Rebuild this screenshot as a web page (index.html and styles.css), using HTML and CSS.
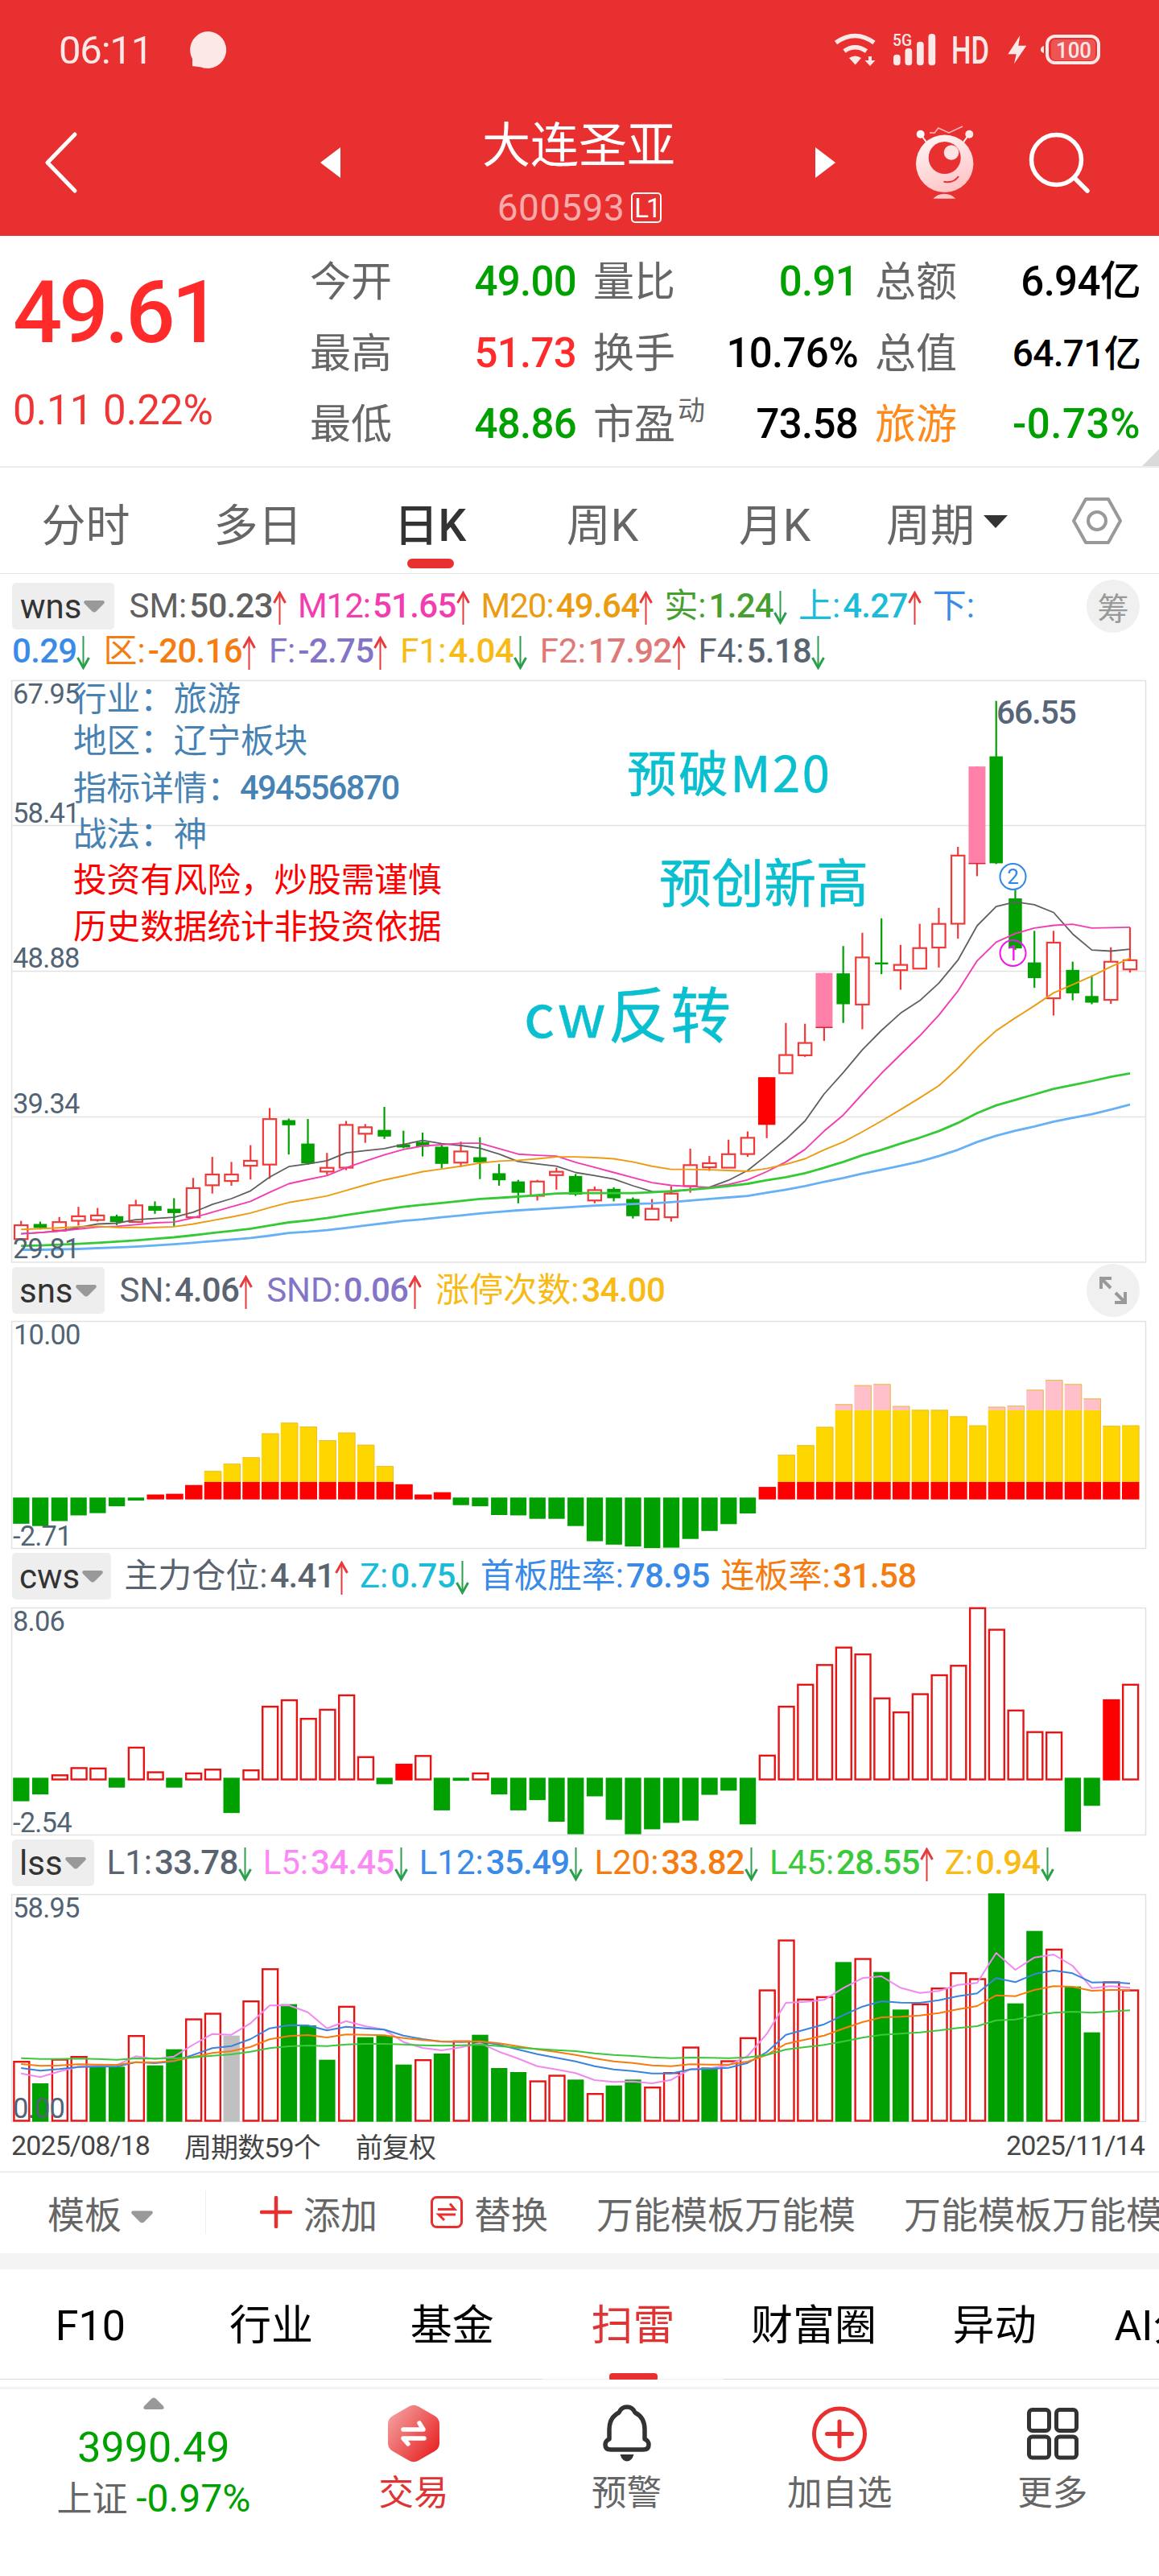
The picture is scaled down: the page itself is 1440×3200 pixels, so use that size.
FILE: index.html
```html
<!DOCTYPE html>
<html lang="zh-CN">
<head>
  <meta charset="UTF-8" />
  <title>大连圣亚 600593</title>
  <meta name="viewport" content="width=device-width, initial-scale=1.0" />
  <link rel="stylesheet" href="styles.css">
</head>
<body>
  <svg class="defs">
    <symbol id="up" viewBox="0 0 17 42"><path d="M8.5 3V42" stroke="#e83a3a" stroke-width="2"/><path d="M1.5 15L8.5 2.5L15.5 15" fill="none" stroke="#e83a3a" stroke-width="3"/></symbol>
    <symbol id="down" viewBox="0 0 17 42"><path d="M8.5 0V39" stroke="#2a9f4c" stroke-width="2"/><path d="M1.5 27L8.5 39.5L15.5 27" fill="none" stroke="#2a9f4c" stroke-width="3"/></symbol>
    <symbol id="caret" viewBox="0 0 26 15"><path d="M2 0H24Q27 1 25 4L16 13Q13 16 10 13L1 4Q-1 1 2 0Z" fill="#999"/></symbol>
  </svg>

  <header class="header">
    <div class="status">
      <span class="time">06:11</span>
      <svg class="bubble" width="46" height="47" viewBox="0 0 46 47"><path d="M23 0A23 23 0 1 1 14 44.500L3 43V34A23 23 0 0 1 23 0Z" fill="#fde8e8"/></svg>
      <svg class="signals" width="340" height="50" viewBox="0 0 340 50" fill="#fde8e8">
        <path d="M8.500 18Q32.300 1 56 18M19 28.500Q32.300 19 46.500 28.500" fill="none" stroke="#fde8e8" stroke-width="5.500"/>
        <path d="M25 37Q32.500 32 40 37L32.700 45.500Z"/>
        <path d="M49 35H53V40H57.500L51 47L44.500 40H49Z"/>
        <text class="sig" x="79" y="21.500" font-size="20" textLength="24" lengthAdjust="spacingAndGlyphs">5G</text>
        <rect x="80" y="32.700" width="8.700" height="13.500" rx="4"/>
        <rect x="94.500" y="25" width="8.700" height="21.200" rx="4"/>
        <rect x="109" y="16.700" width="8.700" height="29.500" rx="4"/>
        <rect x="123.500" y="7" width="8.700" height="39.200" rx="4"/>
        <text class="sig" x="152" y="44" font-size="48" textLength="47" lengthAdjust="spacingAndGlyphs">HD</text>
        <path d="M237.300 9L222.300 32.300H232.700L230 44.300L245.300 21.700H235.300Z"/>
        <rect x="271" y="10" width="64" height="33" rx="10" fill="none" stroke="#fde8e8" stroke-width="4"/>
        <rect x="276" y="14" width="55" height="26" rx="5" fill-opacity=".2"/>
        <path d="M267 22V31Q263 30 263 26.500Q263 23 267 22Z"/>
        <text class="sig" x="282" y="37.300" font-size="27" textLength="44" lengthAdjust="spacingAndGlyphs">100</text>
      </svg>
    </div>
    <div class="titlebar">
      <svg class="back" width="44" height="78" viewBox="0 0 44 78"><path d="M39 4L5 39L39 74" fill="none" stroke="#fff" stroke-width="5" stroke-linecap="round" stroke-linejoin="round"/></svg>
      <svg class="prev" width="25" height="38" viewBox="0 0 25 38"><path d="M25 0V38L0 19Z" fill="#fff"/></svg>
      <div class="stock">
        <div class="stock-name">大连圣亚</div>
        <div class="stock-code">600593<span class="level">L1</span></div>
      </div>
      <svg class="next" width="25" height="38" viewBox="0 0 25 38"><path d="M0 0V38L25 19Z" fill="#fff"/></svg>
      <svg class="robot" width="88" height="100" viewBox="0 0 88 100">
        <defs><linearGradient id="rg" x1="0.3" y1="0" x2="0.7" y2="1"><stop offset="0" stop-color="#fff4f4"/><stop offset="1" stop-color="#ffc2c4"/></linearGradient></defs>
        <path d="M14 17L22 28M74 17L66 28" stroke="#fff" stroke-width="2"/>
        <circle cx="13.700" cy="16.700" r="5" fill="#fff"/><circle cx="74.300" cy="16.700" r="5" fill="#ffe9e9"/>
        <path d="M25 15H31.300L35.700 9L49 15L66 7" fill="none" stroke="#ffb9b9" stroke-width="1.500"/>
        <circle cx="43.700" cy="53.300" r="35.700" fill="url(#rg)"/>
        <circle cx="43.700" cy="46" r="20" fill="#e83030"/>
        <circle cx="52" cy="39.500" r="9.300" fill="#ffe3e3"/>
        <path d="M42.500 75.800Q55 78 61 69" fill="none" stroke="#e83030" stroke-width="2"/>
        <path d="M29.300 96.700Q35 90.700 43.300 90.700T57.300 96.700Z" fill="#ffc9c9"/>
      </svg>
      <svg class="search" width="78" height="78" viewBox="0 0 78 78"><g fill="none" stroke="#fff" stroke-width="5.500" stroke-linecap="round"><circle cx="34.500" cy="34.500" r="31"/><path d="M57 57L73 73"/></g></svg>
    </div>
  </header>

  <section class="quote">
    <div class="price-box">
      <div class="price">49.61</div>
      <div class="change">0.11 0.22%</div>
    </div>
    <div class="quote-grid">
      <div class="cell"><span>今开</span><b class="down">49.00</b></div>
      <div class="cell"><span>量比</span><b class="down">0.91</b></div>
      <div class="cell"><span>总额</span><b class="yi">6.94亿</b></div>
      <div class="cell"><span>最高</span><b class="up">51.73</b></div>
      <div class="cell"><span>换手</span><b>10.76%</b></div>
      <div class="cell"><span>总值</span><b class="yi small">64.71亿</b></div>
      <div class="cell"><span>最低</span><b class="down">48.86</b></div>
      <div class="cell"><span>市盈<sup>动</sup></span><b>73.58</b></div>
      <div class="cell"><span class="trade">旅游</span><b class="down wide">-0.73%</b></div>
    </div>
    <svg class="corner" width="21" height="21" viewBox="0 0 21 21"><path d="M21 0V21H0Z" fill="#dadada"/></svg>
  </section>

  <nav class="periods">
    <span>分时</span>
    <span>多日</span>
    <span class="active">日K</span>
    <span>周K</span>
    <span>月K</span>
    <span>周期<svg width="30" height="16" viewBox="0 0 30 16"><path d="M0 0H30L15 16Z" fill="#333"/></svg></span>
    <svg class="hexagon" width="64" height="60" viewBox="0 0 64 60"><g fill="none" stroke="#999" stroke-width="4" stroke-linejoin="round"><path d="M18 3H46L61 30L46 57H18L3 30Z"/><circle cx="32" cy="30" r="11"/></g></svg>
  </nav>

  <div class="legend main-legend">
    <div class="legend-row">
      <span class="tag">wns<svg width="26" height="15"><use href="#caret"/></svg></span>
      <span class="ind gray">SM:<b>50.23</b><svg><use href="#up"/></svg></span>
      <span class="ind pink">M12:<b>51.65</b><svg><use href="#up"/></svg></span>
      <span class="ind amber">M20:<b>49.64</b><svg><use href="#up"/></svg></span>
      <span class="ind green">实:<b>1.24</b><svg><use href="#down"/></svg></span>
      <span class="ind cyan">上:<b>4.27</b><svg><use href="#up"/></svg></span>
      <span class="ind blue">下:</span>
      <span class="round">筹</span>
    </div>
    <div class="legend-row second">
      <span class="ind blue lead"><b>0.29</b><svg><use href="#down"/></svg></span>
      <span class="ind orange">区:<b>-20.16</b><svg><use href="#up"/></svg></span>
      <span class="ind purple">F:<b>-2.75</b><svg><use href="#up"/></svg></span>
      <span class="ind yellow">F1:<b>4.04</b><svg><use href="#down"/></svg></span>
      <span class="ind rose">F2:<b>17.92</b><svg><use href="#up"/></svg></span>
      <span class="ind slate">F4:<b>5.18</b><svg><use href="#down"/></svg></span>
    </div>
  </div>

  <svg class="chart main" viewBox="0 0 1440 724">
    <path class="frame" d="M14.500 0.500H1423.500V723H14.500ZM14.500 180.500H1423.500M14.500 361.500H1423.500M14.500 542.500H1423.500"/>
    <g id="kline"></g>
    <g class="axis">
      <text x="16" y="29">67.95</text>
      <text x="16" y="177">58.41</text>
      <text x="16" y="357">48.88</text>
      <text x="16" y="538">39.34</text>
      <text x="16" y="718">29.81</text>
    </g>
    <text class="peak" x="1238" y="54">66.55</text>
    <g class="note">
      <text x="91" y="38">行业：旅游</text>
      <text x="91" y="90">地区：辽宁板块</text>
      <text x="91" y="149">指标详情：</text>
      <text class="id" x="298" y="148">494556870</text>
      <text x="91" y="206">战法：神</text>
    </g>
    <g class="note warn">
      <text x="91" y="263">投资有风险，炒股需谨慎</text>
      <text x="91" y="321">历史数据统计非投资依据</text>
    </g>
    <g class="signal">
      <text x="779" y="139" font-size="61.500" textLength="252">预破M20</text>
      <text x="819" y="276" font-size="65">预创新高</text>
      <text x="651" y="444" font-size="74.500" textLength="257">cw反转</text>
    </g>
    <g class="mark">
      <circle cx="1258.500" cy="244" r="16" stroke="#2e86e8"/><text x="1258.500" y="253" fill="#2e86e8">2</text>
      <circle cx="1258.500" cy="339" r="16" stroke="#f014f0"/><text x="1258.500" y="348" fill="#f014f0">1</text>
    </g>
  </svg>

  <div class="legend">
    <div class="legend-row loose">
      <span class="tag">sns<svg width="26" height="15"><use href="#caret"/></svg></span>
      <span class="ind slate">SN:<b>4.06</b><svg><use href="#up"/></svg></span>
      <span class="ind purple">SND:<b>0.06</b><svg><use href="#up"/></svg></span>
      <span class="ind yellow">涨停次数:<b>34.00</b></span>
      <span class="round"><svg width="34" height="34" viewBox="0 0 34 34"><g fill="none" stroke="#999" stroke-width="4"><path d="M2 15V2H15M2 2L14 14M32 19V32H19M32 32L20 20"/></g></svg></span>
    </div>
  </div>
  <svg class="chart sub" viewBox="0 0 1440 283">
    <path class="frame" d="M14.500 0.500H1423.500V282.500H14.500Z"/>
    <g id="sns"></g>
    <g class="axis"><text x="17" y="29">10.00</text><text x="16" y="278.500">-2.71</text></g>
  </svg>

  <div class="legend">
    <div class="legend-row">
      <span class="tag">cws<svg width="26" height="15"><use href="#caret"/></svg></span>
      <span class="ind slate">主力仓位:<b>4.41</b><svg><use href="#up"/></svg></span>
      <span class="ind cyan">Z:<b>0.75</b><svg><use href="#down"/></svg></span>
      <span class="ind blue">首板胜率:<b>78.95</b></span>
      <span class="ind orange">连板率:<b>31.58</b></span>
    </div>
  </div>
  <svg class="chart sub" viewBox="0 0 1440 283">
    <path class="frame" d="M14.500 0.500H1423.500V282.500H14.500Z"/>
    <g id="cws"></g>
    <g class="axis"><text x="16" y="29">8.06</text><text x="16" y="278.500">-2.54</text></g>
  </svg>

  <div class="legend">
    <div class="legend-row">
      <span class="tag">lss<svg width="26" height="15"><use href="#caret"/></svg></span>
      <span class="ind slate">L1:<b>33.78</b><svg><use href="#down"/></svg></span>
      <span class="ind violet">L5:<b>34.45</b><svg><use href="#down"/></svg></span>
      <span class="ind blue">L12:<b>35.49</b><svg><use href="#down"/></svg></span>
      <span class="ind orange">L20:<b>33.82</b><svg><use href="#down"/></svg></span>
      <span class="ind lime">L45:<b>28.55</b><svg><use href="#up"/></svg></span>
      <span class="ind yellow">Z:<b>0.94</b><svg><use href="#down"/></svg></span>
    </div>
  </div>
  <svg class="chart sub" viewBox="0 0 1440 283">
    <path class="frame" d="M14.500 0.500H1423.500V282.500H14.500Z"/>
    <g id="lss"></g>
    <g class="axis"><text x="16" y="28.500">58.95</text><text x="16" y="278">0.00</text></g>
  </svg>

  <div class="dates">
    <span>2025/08/18</span>
    <span class="count">周期数59个</span>
    <span>前复权</span>
    <span class="end">2025/11/14</span>
  </div>

  <div class="toolbar">
    <span class="tpl">模板<svg width="27" height="16" viewBox="0 0 26 15"><use href="#caret"/></svg></span>
    <span class="add"><svg width="40" height="40" viewBox="0 0 40 40"><path d="M20 2V38M2 20H38" stroke="#e83030" stroke-width="4.500" stroke-linecap="round"/></svg>添加</span>
    <span class="swap"><svg width="40" height="40" viewBox="0 0 40 40"><g fill="none" stroke="#e83030" stroke-width="3"><rect x="1.500" y="1.500" width="37" height="37" rx="6"/><path d="M9 16.500H30L24 9.500M31 23H10L17 30"/></g></svg>替换</span>
    <span class="preset">万能模板万能模</span>
    <span class="preset">万能模板万能模</span>
  </div>

  <nav class="info-tabs">
    <span>F10</span>
    <span>行业</span>
    <span>基金</span>
    <span class="active">扫雷</span>
    <span>财富圈</span>
    <span>异动</span>
    <span>AI分析</span>
  </nav>

  <footer class="bottom">
    <div class="index">
      <svg width="26" height="15" viewBox="0 0 26 15"><path d="M10 2Q13 -1 16 2L25 11Q27 15 23 15H3Q-1 15 1 11Z" fill="#999"/></svg>
      <div class="index-value">3990.49</div>
      <div class="index-name">上证 <i>-0.97%</i></div>
    </div>
    <div class="item trade-item">
      <svg width="64" height="72" viewBox="0 0 64 72">
        <defs><linearGradient id="hg" x1="0" y1="0.15" x2="0.9" y2="0.9"><stop offset="0" stop-color="#f4a0a0"/><stop offset="1" stop-color="#e82424"/></linearGradient></defs>
        <path d="M26 2.500Q32 -1 38 2.500L58 14Q64 17.500 64 24V48Q64 54.500 58 58L38 69.500Q32 73 26 69.500L6 58Q0 54.500 0 48V24Q0 17.500 6 14Z" fill="url(#hg)"/>
        <path d="M19 31H44L39 23M45 42H19L25 49" fill="none" stroke="#fff" stroke-width="5.500" stroke-linecap="round" stroke-linejoin="round"/>
      </svg>
      <span>交易</span>
    </div>
    <div class="item">
      <svg width="60" height="72" viewBox="0 0 60 72"><path d="M30 3Q37 3 40 10Q52 16 52 31V43Q57 45 57 50Q57 56 50 56H10Q3 56 3 50Q3 45 8 43V31Q8 16 20 10Q23 3 30 3Z" fill="none" stroke="#333" stroke-width="5.500" stroke-linejoin="round"/><path d="M21.500 62H38.500Q36 70.500 30 70.500T21.500 62Z" fill="#333"/></svg>
      <span>预警</span>
    </div>
    <div class="item">
      <svg width="70" height="72" viewBox="0 0 70 72"><g fill="none" stroke="#e83030" stroke-width="5" stroke-linecap="round"><circle cx="35" cy="36.500" r="31.500"/><path d="M35 21V52M19.500 36.500H50.500"/></g></svg>
      <span>加自选</span>
    </div>
    <div class="item">
      <svg width="64" height="72" viewBox="0 0 64 72"><g fill="none" stroke="#333" stroke-width="5"><rect x="2.500" y="6.500" width="25" height="26" rx="4"/><rect x="36.500" y="6.500" width="25" height="26" rx="4"/><rect x="2.500" y="40" width="25" height="26" rx="4"/><rect x="36.500" y="40" width="25" height="26" rx="4"/></g></svg>
      <span>更多</span>
    </div>
  </footer>

  <script src="charts.js"></script>
</body>
</html>
```
FILE: styles.css
```css
:root {
  --red: #e93030;
  --rise: #ff2a2a;
  --fall: #00a000;
  --text: #666;
  --line: #e6e6e6;
}

* {
  box-sizing: border-box;
}

body {
  margin: 0;
  width: 1440px;
  overflow-x: hidden;
  font-family: Roboto, "Noto Sans CJK SC", sans-serif;
  background: #fff;
  color: var(--text);
}

svg {
  display: block;
  flex: none;
}

b {
  font-weight: 500;
}

.defs {
  position: absolute;
  width: 0;
  height: 0;
}

/* header */
.header {
  height: 293px;
  background: var(--red);
  color: #fff;
}

.status {
  display: flex;
  align-items: center;
  height: 124px;
  padding: 0 70px 0 73px;
}

.time {
  width: 163px;
  font-size: 49px;
  letter-spacing: -1.2px;
  color: #fde8e8;
}

.signals {
  margin: -4px 0 0 auto;
  overflow: visible;
}

.sig {
  font-weight: 500;
}

.titlebar {
  display: flex;
  height: 169px;
  padding-left: 54px;
}

.back {
  margin-top: 39px;
}

.prev {
  margin: 59px 0 0 300px;
}

.stock {
  width: 590px;
  text-align: center;
}

.stock-name {
  margin-top: 18px;
  padding-left: 2px;
  font-size: 60px;
  line-height: 80px;
}

.stock-code {
  display: flex;
  justify-content: center;
  align-items: center;
  height: 46px;
  margin-top: 13px;
  padding-left: 4px;
  gap: 8px;
  font-size: 46px;
  letter-spacing: 0.6px;
  color: rgba(255, 255, 255, 0.6);
}

.level {
  width: 38px;
  height: 38px;
  border: 2px solid #fff;
  border-radius: 5px;
  font-size: 33px;
  line-height: 35px;
  letter-spacing: -3px;
  color: #fff;
}

.next {
  margin-top: 59px;
}

.robot {
  margin: 26px 0 0 92px;
}

.search {
  margin: 40px 0 0 60px;
}

/* quote */
.quote {
  position: relative;
  display: flex;
  height: 288px;
  border-bottom: 2px solid #ececec;
  padding: 13px 23px 0 16px;
}

.price-box {
  width: 369px;
}

.price {
  margin-top: 17px;
  font-size: 108px;
  line-height: 130px;
  font-weight: 500;
  letter-spacing: -4.2px;
  color: var(--rise);
}

.change {
  margin-top: 27px;
  font-size: 51px;
  line-height: 60px;
  color: #f03434;
}

.quote-grid {
  flex: 1;
  display: grid;
  grid-template-columns: 331px 329px 330px;
  grid-template-rows: repeat(3, 88.5px);
  column-gap: 21px;
}

.cell {
  display: flex;
  justify-content: space-between;
  align-items: center;
  font-size: 51px;
  line-height: 60px;
  white-space: nowrap;
}

.cell span {
  padding-top: 2px;
}

.cell b {
  color: #000;
  letter-spacing: -0.7px;
}

.cell .yi {
  font-size: 51px;
}

.cell .small {
  font-size: 46px;
}

.cell b.up {
  color: var(--rise);
}

.cell b.down {
  color: var(--fall);
}

.cell b.wide {
  letter-spacing: 0.5px;
}

.cell .trade {
  color: #ff8a1c;
}

.cell sup {
  margin-left: 3px;
  font-size: 34px;
  line-height: 0;
  vertical-align: 23px;
}

.corner {
  position: absolute;
  right: 0;
  bottom: 0;
}

/* period tabs */
.periods {
  display: flex;
  align-items: center;
  height: 132px;
  border-bottom: 1px solid var(--line);
  font-size: 55px;
}

.periods span {
  position: relative;
  display: flex;
  justify-content: center;
  align-items: center;
  width: 214px;
  height: 131px;
  padding: 2px 1px 0 0;
  gap: 11px;
}

.periods .active {
  color: #333;
  font-weight: 500;
}

.periods .active::after {
  content: "";
  position: absolute;
  left: 78px;
  bottom: 6px;
  width: 58px;
  height: 12px;
  border-radius: 6px;
  background: var(--red);
}

.hexagon {
  margin-left: 47px;
}

/* indicator legends */
.legend {
  height: 73px;
  padding: 5px 24px 0 15px;
}

.main + .legend {
  height: 72px;
}

.main-legend {
  height: 132px;
  padding-top: 11px;
}

.legend-row {
  display: flex;
  align-items: center;
  height: 58px;
  gap: 14px;
}

.loose {
  gap: 17px;
}

.second {
  height: 54px;
  gap: 16px;
}

.tag {
  display: flex;
  align-items: center;
  gap: 3px;
  height: 58px;
  margin-right: 2px;
  padding: 0 10px 0 9px;
  border-radius: 5px;
  background: #eee;
  color: #333;
  font-size: 42px;
}

.main-legend .tag {
  margin-right: 4px;
  padding: 0 12px 0 10px;
}

.ind {
  display: flex;
  align-items: center;
  font-size: 42px;
  line-height: 56px;
  white-space: nowrap;
}

.ind b {
  margin-left: 3px;
  letter-spacing: -0.7px;
}

.ind.lead b {
  margin-left: 0;
}

.ind svg {
  width: 17px;
  height: 42px;
  margin-top: 3px;
}

.round {
  display: flex;
  justify-content: center;
  align-items: center;
  width: 66px;
  height: 66px;
  margin-left: auto;
  border-radius: 50%;
  background: #f0f0f0;
  color: #999;
  font-size: 39px;
}

.gray { color: #606060; }
.pink { color: #f23cb0; letter-spacing: -1px; }
.amber { color: #eb9c10; letter-spacing: -1px; }
.green { color: #45a030; }
.cyan { color: #1abcd8; }
.blue { color: #3a8ae8; }
.orange { color: #f57c10; }
.purple { color: #8474c8; }
.yellow { color: #f8ba14; }
.rose { color: #e07878; }
.slate { color: #5a6470; }
.violet { color: #fa8af4; }
.lime { color: #3cc83c; }

/* charts */
.chart {
  width: 1440px;
  overflow: visible;
}

.main {
  height: 724px;
}

.sub {
  height: 283px;
}

.frame {
  fill: none;
  stroke: #e2e2e2;
  stroke-width: 1.5;
}

.axis {
  fill: #526473;
  font-size: 34.5px;
  letter-spacing: -0.8px;
}

.peak {
  fill: #566577;
  font-size: 41px;
  font-weight: 500;
  letter-spacing: -1.2px;
}

.note {
  fill: #4682b4;
  font-family: "Noto Sans CJK SC", sans-serif;
  font-size: 41.6px;
}

.note .id {
  font-family: Roboto, sans-serif;
  font-weight: 500;
  letter-spacing: -1.7px;
}

.warn {
  fill: #f00;
}

.signal {
  fill: #0abfcf;
  font-family: "Noto Sans CJK SC", sans-serif;
  font-weight: 400;
  stroke: #0abfcf;
  stroke-width: 0.6;
}

.mark circle {
  fill: none;
  stroke-width: 2;
}

.mark text {
  font-size: 26px;
  text-anchor: middle;
}

.dates {
  display: flex;
  align-items: center;
  height: 61px;
  padding: 0 18px 3px 14px;
  font-size: 34px;
  letter-spacing: -0.9px;
  color: #444;
}

.count {
  margin: 0 44px 0 43px;
}

.end {
  margin-left: auto;
}

/* template toolbar */
.toolbar {
  display: flex;
  align-items: center;
  height: 122px;
  border-top: 2px solid #eee;
  border-bottom: 20px solid #f4f4f4;
  padding: 0 0 3px 59px;
  font-size: 46px;
  white-space: nowrap;
  overflow: hidden;
}

.toolbar span {
  display: flex;
  align-items: center;
  flex: none;
}

.tpl {
  width: 197px;
  height: 54px;
  gap: 12px;
  border-right: 1px solid #eee;
}

.tpl svg {
  margin-top: 12px;
}

.add {
  gap: 14px;
  margin-left: 67px;
}

.swap {
  gap: 14px;
  margin-left: 66px;
}

.preset {
  margin-left: 60px;
}

/* info tabs */
.info-tabs {
  display: flex;
  height: 149px;
  border-bottom: 3px solid #f2f2f2;
  color: #000;
  font-size: 52px;
  overflow: hidden;
}

.info-tabs span {
  position: relative;
  flex: none;
  width: 224.7px;
  height: 137px;
  border-bottom: 1.5px solid #d8d8d8;
  line-height: 141px;
  text-align: center;
}

.info-tabs .active {
  color: #e03434;
  border-color: #f0f0f0;
}

.info-tabs .active::after {
  content: "";
  position: absolute;
  left: 83px;
  bottom: -1px;
  width: 60px;
  height: 8px;
  border-radius: 4px 4px 1px 1px;
  background: var(--red);
}

/* bottom bar */
.bottom {
  display: flex;
  height: 232px;
}

.index {
  width: 382px;
  padding-top: 10px;
  text-align: center;
}

.index svg {
  margin: 0 auto;
}

.index-value {
  margin-top: 18px;
  font-size: 52px;
  line-height: 60px;
  color: var(--fall);
}

.index-name {
  margin-top: 3px;
  font-size: 44px;
  line-height: 60px;
}

.index-name i {
  font-size: 48px;
  font-style: normal;
  color: var(--fall);
}

.item {
  display: flex;
  flex-direction: column;
  align-items: center;
  width: 264.7px;
  padding-top: 19px;
  font-size: 43.5px;
  line-height: 60px;
}

.item span {
  margin-top: 9px;
}

.trade-item {
  color: #e03434;
}
```
FILE: charts.js
```js
const X0 = 26.2;
const STEP = 23.755;
const GREEN = '#00a000';
const RED = '#ff0000';

const cx = i => X0 + i * STEP;

function add(parent, name, attrs) {
  const el = document.createElementNS('http://www.w3.org/2000/svg', name);
  for (const k in attrs) el.setAttribute(k, attrs[k]);
  parent.appendChild(el);
}

// outline bars keep their stroke inside the given box
function box(g, x, y, w, h, color, hollow, sw = 2.4) {
  if (hollow) {
    add(g, 'rect', { x: x + sw / 2, y: y + sw / 2, width: w - sw, height: Math.max(h - sw, 1), fill: '#fff', stroke: color, 'stroke-width': sw });
  } else {
    add(g, 'rect', { x, y, width: w, height: Math.max(h, 1.5), fill: color });
  }
}

function line(g, values, y, color, width) {
  const points = values.map((v, i) => cx(i).toFixed(1) + ',' + y(v).toFixed(1)).join(' ');
  add(g, 'polyline', { points, fill: 'none', stroke: color, 'stroke-width': width, 'stroke-linejoin': 'round' });
}

// high, body top, body bottom, low, type (r rise, g fall, f solid red, p pink)
const candles = [
  [1416,1427,1463,1463,'r'],[1418,1424,1434,1438,'g'],[1406,1419,1441,1441,'r'],[1380,1404,1416,1428,'r'],
  [1383,1402,1414,1418,'r'],[1400,1404,1419,1427,'g'],[1362,1376,1419,1421,'r'],[1366,1378,1390,1398,'g'],
  [1358,1385,1396,1430,'g'],[1306,1332,1407,1408,'r'],[1252,1297,1325,1346,'r'],[1265,1297,1314,1326,'r'],
  [1222,1262,1275,1310,'r'],[1127,1155,1272,1308,'r'],[1154,1158,1171,1246,'g'],[1155,1218,1269,1272,'g'],
  [1242,1280,1290,1298,'r'],[1160,1170,1280,1286,'r'],[1168,1176,1193,1216,'r'],[1124,1183,1200,1206,'g'],
  [1185,1220,1228,1230,'g'],[1190,1214,1226,1251,'g'],[1222,1226,1270,1281,'g'],[1213,1238,1267,1278,'r'],
  [1202,1253,1266,1309,'g'],[1270,1294,1312,1326,'g'],[1311,1315,1344,1371,'g'],[1311,1315,1352,1364,'r'],
  [1280,1290,1299,1336,'r'],[1296,1301,1349,1352,'g'],[1328,1337,1364,1371,'r'],[1330,1334,1358,1366,'g'],
  [1356,1360,1404,1410,'g'],[1360,1385,1413,1413,'r'],[1327,1346,1407,1418,'r'],[1231,1273,1327,1344,'r'],
  [1250,1268,1279,1288,'r'],[1208,1245,1280,1280,'r'],[1187,1203,1245,1252,'r'],[1048,1048,1170,1204,'f'],
  [909,991,1038,1038,'r'],[911,960,992,996,'r'],[781,781,920,955,'p'],[712,782,861,909,'g'],
  [678,741,862,925,'r'],[641,754,759,784,'g'],[709,760,774,824,'r'],[655,717,770,770,'r'],
  [614,655,716,767,'r'],[458,480,655,693,'r'],[252,252,500,533,'p'],[84,226,500,502,'g'],
  [568,590,718,722,'g'],[673,754,794,819,'g'],[673,703,846,890,'r'],[752,773,833,851,'g'],
  [787,840,857,861,'g'],[715,752,850,860,'r'],[664,748,772,780,'r']
];

const maLines = [
  ['#606060', 1.8, [1449,1446,1442,1433,1424,1422,1413,1410,1407,1394,1374,1359,1339,1304,1277,1270,1262,1242,1236,1231,1220,1210,1218,1223,1230,1245,1264,1270,1276,1292,1300,1309,1326,1341,1342,1336,1330,1312,1287,1248,1207,1160,1091,1036,978,928,884,852,807,748,660,611,599,606,626,681,722,725,720]],
  ['#f23cb0', 1.9, [1449,1446,1442,1437,1432,1430,1426,1421,1419,1408,1394,1380,1366,1343,1321,1310,1300,1280,1263,1247,1233,1224,1221,1217,1217,1231,1245,1248,1250,1266,1279,1292,1305,1318,1325,1328,1330,1323,1311,1290,1265,1233,1186,1145,1091,1038,990,942,889,827,750,702,680,666,659,656,666,665,664]],
  ['#eb9c10', 1.9, [1438,1436,1434,1431,1430,1433,1433,1433,1431,1424,1415,1406,1396,1382,1369,1361,1352,1338,1324,1311,1301,1290,1283,1276,1268,1263,1261,1257,1252,1252,1254,1257,1265,1276,1284,1284,1285,1287,1289,1282,1271,1257,1234,1214,1188,1160,1131,1101,1070,1025,973,929,896,865,832,811,789,765,743]],
  ['#36c936', 2.8, [1480,1479,1477,1475,1472,1469,1466,1462,1458,1453,1447,1442,1436,1428,1420,1415,1409,1401,1394,1387,1380,1375,1370,1365,1360,1357,1354,1350,1346,1345,1345,1345,1345,1343,1340,1336,1332,1327,1321,1312,1304,1294,1280,1265,1248,1234,1218,1203,1186,1165,1140,1120,1106,1092,1078,1068,1058,1047,1038]],
  ['#66b0f5', 2.8, [1490,1490,1489,1488,1486,1484,1482,1479,1476,1472,1468,1464,1460,1454,1447,1444,1440,1434,1428,1422,1416,1412,1407,1402,1397,1393,1389,1386,1383,1380,1377,1375,1373,1371,1368,1364,1360,1356,1352,1344,1336,1327,1316,1306,1295,1285,1275,1264,1250,1234,1214,1198,1185,1174,1162,1152,1143,1131,1118]]
];

function drawKline() {
  const g = document.getElementById('kline');
  const y = v => (v - 31) * 723 / 1491;
  candles.forEach(([hi, top, bottom, lo, type], i) => {
    const color = { r: '#f03a3a', g: GREEN, f: RED, p: '#ff80a8' }[type];
    const wick = type === 'g' ? GREEN : '#f03a3a';
    const w = { r: 18.5, g: 16.5, f: 21.5, p: 21 }[type];
    add(g, 'path', { d: `M${cx(i)} ${y(hi)}V${y(lo)}`, stroke: wick, 'stroke-width': 2.2 });
    const edge = type === 'r' ? 1 : 0;
    box(g, cx(i) - w / 2, y(top) - edge, w, y(bottom) - y(top) + edge * 2, color, type === 'r', 2.2);
    if (type === 'p') box(g, cx(i) - w / 2, y(bottom) - 0.5, w, 1.5, '#e02030', false);
  });
  maLines.forEach(([color, width, values]) => line(g, values, y, color, width));
}

const sns = [705,711,698,683,677,659,644,628,626,603,566,547,530,467,439,449,485,465,497,553,601,628,622,656,659,682,683,692,692,711,751,760,765,769,768,745,724,706,678,608,523,498,450,390,340,337,395,405,405,422,446,397,394,352,326,337,375,447,446];

function drawSns() {
  const g = document.getElementById('sns');
  const y = v => (v - 171) * 282.5 / 599;
  sns.forEach((v, i) => {
    const x = cx(i) - 10;
    if (v > 641) {
      box(g, x, y(636), 20.3, y(v) - y(636), GREEN, false);
      return;
    }
    if (v < 400) box(g, x, y(v), 21.5, y(406) - y(v), '#ffc0cb', false);
    if (v < 595) {
      const top = v < 400 ? 406 : v;
      box(g, x, y(top), 21.5, y(595) - y(top), '#ffd700', false);
      add(g, 'path', { d: `M${x} ${y(v) + 0.5}H${x + 21}V${y(595)}`, fill: 'none', stroke: '#eebc3c', 'stroke-width': 1 });
    }
    const base = Math.max(v, 595);
    box(g, x, y(base), 21.5, y(641) - y(base), RED, false);
  });
}

const cws = [1436,1418,1366,1347,1348,1400,1293,1358,1400,1361,1351,1467,1353,1185,1168,1217,1193,1155,1318,1391,1338,1315,1460,1382,1361,1418,1460,1433,1490,1523,1423,1485,1523,1510,1493,1487,1419,1408,1497,1314,1185,1127,1075,1029,1047,1163,1200,1152,1102,1077,925,982,1195,1252,1253,1516,1448,1168,1127];
const cwsSolid = [20, 57];

function drawCws() {
  const g = document.getElementById('cws');
  const y = v => (v - 925) * 282.5 / 600;
  cws.forEach((v, i) => {
    const x = cx(i) - 10;
    if (v > 1381) {
      box(g, x, y(1374), 20.3, y(v) - y(1374), GREEN, false);
    } else {
      const solid = cwsSolid.includes(i);
      box(g, x, y(v) - 0.5, 21.3, y(1381) - y(v) + 0.5, solid ? RED : '#e61414', !solid);
    }
  });
}

const lss = 'r838 g922 r830 r820 g860 g860 r742 g855 g795 r680 r659 x744 r613 r493 g627 g706 g834 r633 g750 g745 g852 r832 g811 r762 g741 g865 g880 r911 r890 g908 r958 g930 g908 r934 r880 r785 g862 r836 r750 r572 r386 r606 r597 g470 r455 g507 g647 r624 r565 r508 r530 g214 g624 g354 r420 g561 g732 r542 r572'.split(' ');

const lssLines = [
  ['#f08af0', [885,899,878,860,855,854,821,831,822,778,738,741,698,632,631,657,717,690,709,722,768,790,799,788,772,804,830,858,870,884,910,917,915,922,909,869,866,855,820,738,622,618,611,567,530,523,566,585,578,555,548,436,499,453,442,484,567,560,566]],
  ['#3a84dc', [865,875,869,861,860,860,843,847,840,816,791,783,757,717,705,706,725,711,717,722,744,757,767,768,766,778,796,813,827,840,858,870,876,885,885,870,868,864,846,806,741,722,702,668,636,616,621,622,612,597,587,530,545,515,501,512,546,545,550]],
  ['#f57c10', [850,857,855,851,852,853,843,844,838,824,809,802,786,758,746,742,751,740,741,743,753,761,766,766,765,773,784,795,805,816,829,840,846,855,858,851,852,852,841,816,775,759,744,718,694,676,674,669,660,646,634,594,597,574,560,562,577,574,574]],
  ['#3cc83c', [828,831,831,830,831,834,829,830,829,825,819,814,804,791,784,781,783,777,775,775,777,780,782,780,778,783,789,794,798,802,810,816,820,825,828,826,827,828,825,816,796,787,779,766,752,741,737,732,725,716,709,687,684,669,659,655,659,654,650]]
];

function drawLss() {
  const g = document.getElementById('lss');
  const y = v => (v - 217) / 3;
  lss.forEach((s, i) => {
    const v = Number(s.slice(1));
    const type = s[0];
    const color = { r: '#e61414', g: GREEN, x: '#c0c0c0' }[type];
    box(g, cx(i) - 10, y(v), type === 'r' ? 21.3 : 20.3, y(1065) - y(v), color, type === 'r');
  });
  lssLines.forEach(([color, values]) => line(g, values, y, color, 2));
}

drawKline();
drawSns();
drawCws();
drawLss();
```
